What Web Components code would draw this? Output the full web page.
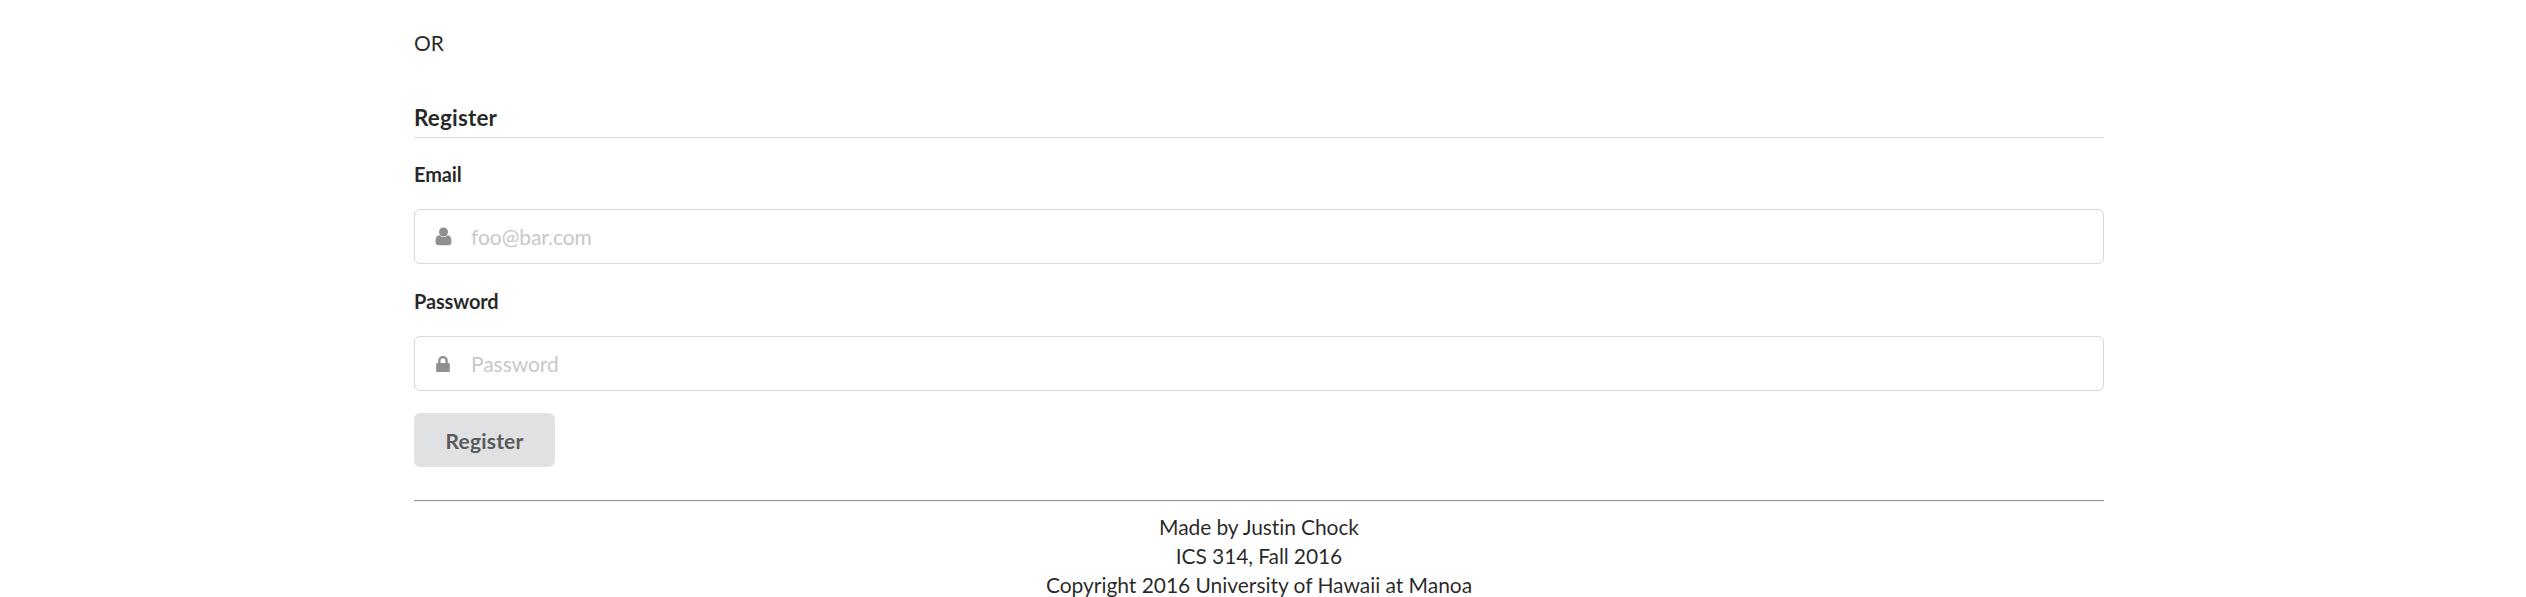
<!DOCTYPE html>
<html lang="en">
<head>
<meta charset="utf-8">
<title>Register</title>
<style>
html, body { margin: 0; background: #fff; }
body { height: 597px; overflow: hidden; font: 21px/29px Lato, "Liberation Sans", sans-serif; font-variant-ligatures: none; color: rgba(0,0,0,.85); }
</style>
</head>
<body>
<register-page></register-page>
<script>
const define = (name, html) => customElements.define(name, class extends HTMLElement {
  constructor() {
    super();
    const t = document.createElement('template');
    t.innerHTML = html;
    this.attachShadow({ mode: 'open' }).append(t.content.cloneNode(true));
  }
  connectedCallback() {
    const input = this.shadowRoot.querySelector('input');
    if (input) {
      input.placeholder = this.getAttribute('placeholder') || '';
      input.type = this.getAttribute('type') || 'text';
    }
  }
});

define('section-header', `
<style>
:host { display: block; font-size: 22.5px; font-weight: 700; line-height: 29px; letter-spacing: .15px; padding-bottom: 5px; border-bottom: 1px solid #d9dadb; }
</style><slot></slot>`);

define('form-field', `
<style>
:host { display: block; }
label { display: block; font-size: 20px; font-weight: 700; line-height: 29px; letter-spacing: -.15px; padding-top: 1px; margin-bottom: 20px; }
.box { display: flex; align-items: center; box-sizing: border-box; height: 55px; border: 1px solid #d6d7d8; border-radius: 6px; background: #fff; }
.icon { display: flex; flex: none; justify-content: center; width: 56px; color: #909090; }
input { flex: 1; min-width: 0; height: 100%; box-sizing: border-box; border: 0; outline: 0; padding: 0; margin: 0; font: inherit; line-height: 26px; letter-spacing: -.05px; color: inherit; background: transparent; }
input::placeholder { color: #c8c8c8; opacity: 1; }
</style>
<label><slot></slot></label>
<div class="box"><span class="icon"><slot name="icon"></slot></span><input></div>`);

define('user-icon', `
<style>:host { display: block; } svg { display: block; }</style>
<svg width="17" height="19" viewBox="0 0 17 19" fill="currentColor"><circle cx="8.5" cy="5" r="4.5"/><path d="M4.4 8.2C1.500 8.300.5 11.100.5 15c0 1.900 1.200 3.200 2.800 3.200h10.400c1.600 0 2.800-1.300 2.800-3.200 0-3.900-1-6.700-3.900-6.800-1 1.100-2.400 1.900-4.100 1.900S5.400 9.300 4.400 8.200Z"/></svg>`);

define('lock-icon', `
<style>:host { display: block; } svg { display: block; }</style>
<svg width="14" height="18" viewBox="0 0 14 18" fill="currentColor"><path fill-rule="evenodd" d="M2.200 8V5.700a4.800 4.800 0 0 1 9.600 0V8h.9c.7 0 1.100.4 1.100 1.100v6.800c0 .7-.4 1.100-1.100 1.100H1.300C.6 17 .2 16.600.2 15.900V9.100C.2 8.400.6 8 1.300 8ZM4.500 8h5V5.700a2.500 2.500 0 0 0-5 0Z"/></svg>`);

define('submit-button', `
<style>
:host { display: block; }
button { display: block; width: 141px; height: 54px; margin: 0; padding: 0; border: 0; border-radius: 6px; background: #e0e1e2; color: #5a5b5c; font: 700 21px/21px Lato, "Liberation Sans", sans-serif; letter-spacing: .2px; }
</style><button type="button"><slot></slot></button>`);

define('page-footer', `
<style>
:host { display: block; text-align: center; letter-spacing: -.1px; }
hr { margin: 0 0 10px; border: 0; border-top: 1px solid #969696; border-bottom: 1px solid #f0f0f0; }
::slotted(div) { height: 29px; }
::slotted(div:last-child) { letter-spacing: -.04px; }
</style><hr><slot></slot>`);

define('register-page', `
<style>
:host { display: block; width: 1690px; margin-left: 414px; padding-top: 28px; }
.or { margin-bottom: 46px; }
section-header { margin-bottom: 21px; }
form-field { margin-bottom: 22px; }
page-footer { margin-top: 33px; }
</style>
<div class="or">OR</div>
<section-header>Register</section-header>
<form-field placeholder="foo@bar.com">Email<user-icon slot="icon"></user-icon></form-field>
<form-field type="password" placeholder="Password">Password<lock-icon slot="icon"></lock-icon></form-field>
<submit-button>Register</submit-button>
<page-footer><div>Made by Justin Chock</div><div>ICS 314, Fall 2016</div><div>Copyright 2016 University of Hawaii at Manoa</div></page-footer>`);
</script>
</body>
</html>
